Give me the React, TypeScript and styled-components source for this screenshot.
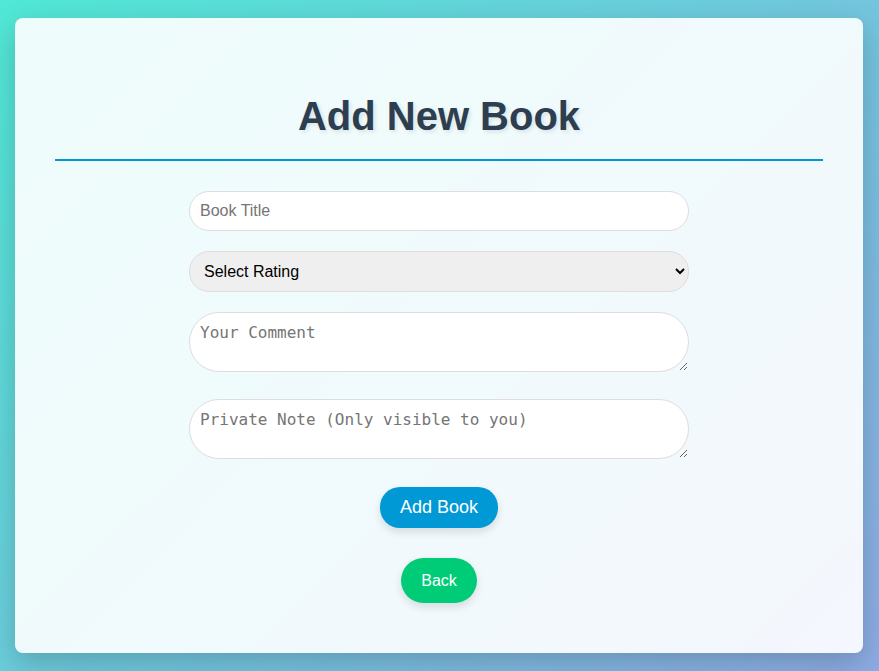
import React from "react";
import styled, { createGlobalStyle } from "styled-components";

const GlobalStyle = createGlobalStyle`
  html, body {
    margin: 0;
    padding: 0;
  }
  body {
    min-height: 100vh;
    font-family: "Liberation Sans", Arial, sans-serif;
    background: linear-gradient(135deg, #50e8d6 0%, #8eabe4 100%);
    background-attachment: fixed;
  }
  * { box-sizing: border-box; }
`;

const Page = styled.div`
  min-height: 100vh;
  padding: 18px 16px 18px 15px;
  display: flex;
  flex-direction: column;
`;

const Card = styled.div`
  flex: 1;
  background: rgba(255, 255, 255, 0.9);
  border-radius: 8px;
  box-shadow: 0 10px 30px rgba(0, 0, 0, 0.2);
  padding: 50px 40px;
  display: flex;
  flex-direction: column;
`;

const Title = styled.h1`
  margin: 26px 0 30px;
  padding-bottom: 20px;
  border-bottom: 2px solid #0099d6;
  text-align: center;
  font-family: "Liberation Sans", Arial, sans-serif;
  font-size: 40px;
  font-weight: 700;
  line-height: normal;
  color: #2c3e50;
  text-shadow: 2px 2px 4px rgba(0, 0, 0, 0.1);
`;

const Form = styled.form`
  display: flex;
  flex-direction: column;
  align-items: center;
`;

const TextInput = styled.input`
  width: 500px;
  height: 40px;
  padding: 10px;
  margin-bottom: 20px;
  border: 1px solid #ddd;
  border-radius: 20px;
  background: #fff;
  font-family: "Liberation Sans", Arial, sans-serif;
  font-size: 16px;
  color: #222;
  outline: none;
  &::placeholder { color: #757575; }
`;

const Select = styled.select`
  width: 500px;
  height: 41px;
  padding: 10px;
  margin-bottom: 20px;
  border: 1px solid #ddd;
  border-radius: 20px;
  background-color: #efefef;
  font-family: "Liberation Sans", Arial, sans-serif;
  font-size: 16px;
  color: #000;
  outline: none;
`;

const TextArea = styled.textarea<{ $gap: number }>`
  display: block;
  width: 500px;
  height: 60px;
  padding: 10px;
  margin-bottom: ${(p) => p.$gap}px;
  border: 1px solid #ddd;
  border-radius: 30px;
  background: #fff;
  font-family: "DejaVu Sans Mono", monospace;
  font-size: 16px;
  color: #222;
  outline: none;
  &::placeholder { color: #757575; }
`;

const Button = styled.button<{ $variant: "primary" | "success" }>`
  border: none;
  border-radius: ${(p) => (p.$variant === "primary" ? "20px" : "23px")};
  cursor: pointer;
  color: #fff;
  font-family: "Liberation Sans", Arial, sans-serif;
  font-size: ${(p) => (p.$variant === "primary" ? "18px" : "16px")};
  line-height: ${(p) => (p.$variant === "primary" ? "21px" : "19px")};
  padding: ${(p) => (p.$variant === "primary" ? "10px 20px" : "13px 20px")};
  background: ${(p) => (p.$variant === "primary" ? "#0099d6" : "#00cc78")};
  box-shadow: 0 4px 8px rgba(0, 0, 0, 0.12);
  margin-bottom: ${(p) => (p.$variant === "primary" ? "30px" : "0")};
`;

export default function App() {
  return (
    <>
      <GlobalStyle />
      <Page>
        <Card>
          <Title>Add New Book</Title>
          <Form onSubmit={(e) => e.preventDefault()}>
            <TextInput type="text" placeholder="Book Title" />
            <Select defaultValue="">
              <option value="">Select Rating</option>
              <option value="1">1</option>
              <option value="2">2</option>
              <option value="3">3</option>
              <option value="4">4</option>
              <option value="5">5</option>
            </Select>
            <TextArea $gap={27} placeholder="Your Comment" />
            <TextArea $gap={28} placeholder="Private Note (Only visible to you)" />
            <Button type="submit" $variant="primary">Add Book</Button>
            <Button type="button" $variant="success">Back</Button>
          </Form>
        </Card>
      </Page>
    </>
  );
}
